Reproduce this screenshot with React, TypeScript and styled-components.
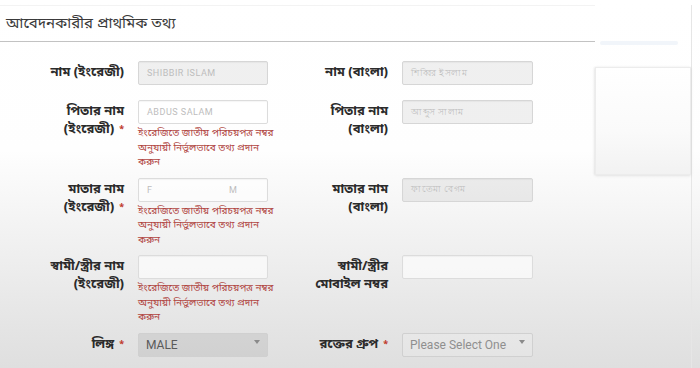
import React from "react";
import styled, { createGlobalStyle } from "styled-components";

const Global = createGlobalStyle`
  html, body { margin: 0; padding: 0; }
  body {
    width: 700px;
    height: 368px;
    overflow: hidden;
    background: linear-gradient(to bottom, #ffffff 0px, #fefefe 150px, #f1f1f1 240px, #e4e4e4 330px, #dfdfdf 368px);
    font-family: "Noto Sans Bengali", "Noto Sans", "Liberation Sans", sans-serif;
    color: #333;
  }
`;

const Page = styled.div`
  display: flex;
  width: 700px;
  height: 368px;
  box-sizing: border-box;
  padding-top: 5px;
`;

const Main = styled.div`
  width: 595px;
  flex: none;
`;

const Heading = styled.div`
  height: 37px;
  box-sizing: border-box;
  border-top: 1px solid #f3f3f3;
  border-bottom: 1px solid #c2c2c2;
  padding-left: 6px;
  display: flex;
  align-items: center;
  font-size: 15px;
  color: #3a3a3a;
`;

const Form = styled.div`
  display: flex;
  flex-direction: column;
  gap: 7px;
  margin-top: 19px;
`;

const Row = styled.div`
  display: grid;
  grid-template-columns: 124px 130px 106px 131px;
  column-gap: 14px;
  min-height: 32px;
  align-items: start;
`;

const Label = styled.div`
  text-align: right;
  padding-top: 3px;
  font-size: 13px;
  line-height: 18px;
  font-weight: 700;
  color: #2b2b2b;
`;

const Star = styled.span`
  color: #c0392b;
  font-size: 9px;
  margin-left: 5px;
  vertical-align: middle;
`;

const Cell = styled.div`
  display: flex;
  flex-direction: column;
`;

const Input = styled.div<{ $ro?: boolean }>`
  height: 24px;
  box-sizing: border-box;
  border: 1px solid ${(p) => (p.$ro ? "#d6d6d6" : "#dcdcdc")};
  border-radius: 2px;
  background: ${(p) => (p.$ro ? "rgba(0,0,0,0.06)" : "rgba(255,255,255,0.6)")};
  box-shadow: inset 0 1px 1px rgba(0,0,0,0.04);
  display: flex;
  align-items: center;
  padding: 0 8px;
  font-family: "Roboto", "Liberation Sans", sans-serif;
  font-size: 9px;
  color: #bdbdbd;
  letter-spacing: 0.5px;
  overflow: hidden;
  white-space: pre;
`;

const Select = styled.div<{ $ro?: boolean }>`
  height: 24px;
  box-sizing: border-box;
  border: 1px solid #d0d0d0;
  border-radius: 2px;
  background: ${(p) => (p.$ro ? "rgba(0,0,0,0.07)" : "rgba(255,255,255,0.15)")};
  display: flex;
  align-items: center;
  justify-content: space-between;
  padding: 0 7px 0 7px;
  font-family: "Roboto", "Liberation Sans", sans-serif;
  font-size: 12px;
  color: ${(p) => (p.$ro ? "#5a5a5a" : "#8f8f8f")};
`;

const Caret = styled.span`
  width: 0;
  height: 0;
  border-left: 3px solid transparent;
  border-right: 3px solid transparent;
  border-top: 4px solid #8a8a8a;
  margin-top: -6px;
`;

const ErrorText = styled.div`
  margin-top: 3px;
  font-size: 10px;
  line-height: 14.5px;
  color: #b0443f;
`;

const ErrorLine = styled.div`
  white-space: nowrap;
`;

const Aside = styled.div`
  flex: 1;
  display: flex;
  flex-direction: column;
  padding-top: 36px;
  border-right: 1px solid #e6e6e6;
  margin-right: 8px;
`;

const AsideTitle = styled.div`
  height: 4px;
  width: 78px;
  margin-left: 5px;
  background: #f1f5fa;
  border-radius: 2px;
`;

const Card = styled.div`
  margin-top: 22px;
  height: 106px;
  background: linear-gradient(to bottom, #ffffff 0%, #fafafa 60%, #f2f2f2 100%);
  border: 1px solid #ececec;
  box-shadow: -1px 0 2px rgba(0,0,0,0.06), 0 1px 3px rgba(0,0,0,0.08);
`;

const ERR_LINES = [
  "ইংরেজিতে জাতীয় পরিচয়পত্র নম্বর",
  "অনুযায়ী নির্ভুলভাবে তথ্য প্রদান",
  "করুন",
];

function FieldError() {
  return (
    <ErrorText>
      {ERR_LINES.map((l) => (
        <ErrorLine key={l}>{l}</ErrorLine>
      ))}
    </ErrorText>
  );
}

export default function App() {
  return (
    <>
      <Global />
      <Page>
        <Main>
          <Heading>আবেদনকারীর প্রাথমিক তথ্য</Heading>
          <Form>
            <Row>
              <Label>নাম (ইংরেজী)</Label>
              <Cell>
                <Input $ro>SHIBBIR ISLAM</Input>
              </Cell>
              <Label>নাম (বাংলা)</Label>
              <Cell>
                <Input $ro>শিব্বির ইসলাম</Input>
              </Cell>
            </Row>
            <Row>
              <Label>
                পিতার নাম
                <br />
                (ইংরেজী)<Star>*</Star>
              </Label>
              <Cell>
                <Input>ABDUS SALAM</Input>
                <FieldError />
              </Cell>
              <Label>
                পিতার নাম
                <br />
                (বাংলা)
              </Label>
              <Cell>
                <Input $ro>আব্দুস সালাম</Input>
              </Cell>
            </Row>
            <Row>
              <Label>
                মাতার নাম
                <br />
                (ইংরেজী)<Star>*</Star>
              </Label>
              <Cell>
                <Input>{"F                            M"}</Input>
                <FieldError />
              </Cell>
              <Label>
                মাতার নাম
                <br />
                (বাংলা)
              </Label>
              <Cell>
                <Input $ro>ফাতেমা বেগম</Input>
              </Cell>
            </Row>
            <Row>
              <Label>
                স্বামী/স্ত্রীর নাম
                <br />
                (ইংরেজী)
              </Label>
              <Cell>
                <Input />
                <FieldError />
              </Cell>
              <Label>
                স্বামী/স্ত্রীর
                <br />
                মোবাইল নম্বর
              </Label>
              <Cell>
                <Input />
              </Cell>
            </Row>
            <Row>
              <Label>
                লিঙ্গ<Star>*</Star>
              </Label>
              <Cell>
                <Select $ro>
                  MALE
                  <Caret />
                </Select>
              </Cell>
              <Label>
                রক্তের গ্রুপ<Star>*</Star>
              </Label>
              <Cell>
                <Select>
                  Please Select One
                  <Caret />
                </Select>
              </Cell>
            </Row>
          </Form>
        </Main>
        <Aside>
          <AsideTitle />
          <Card />
        </Aside>
      </Page>
    </>
  );
}
